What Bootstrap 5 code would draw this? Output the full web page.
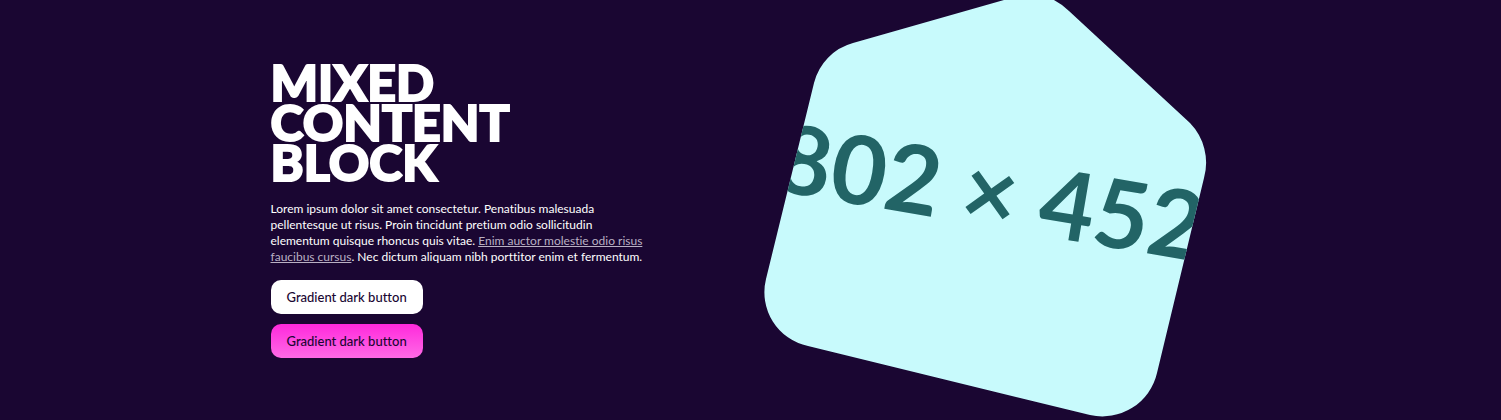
<!DOCTYPE html>
<html lang="en">
<head>
<meta charset="utf-8">
<meta name="viewport" content="width=device-width, initial-scale=1">
<title>Mixed content block</title>
<link href="https://cdn.jsdelivr.net/npm/bootstrap@5.3.0/dist/css/bootstrap.min.css" rel="stylesheet">
<style>
body { background: #1a0632; color: #fff; font-family: Lato, sans-serif; font-variant-ligatures: none; }
.content-wrap { max-width: 984px; }
.block-title { font: 900 50px/40px Lato, sans-serif; -webkit-text-stroke: 2px #fff; margin-bottom: 19px; }
.block-copy { font-size: 12px; line-height: 16px; margin-bottom: 15px; }
.block-copy a { color: #b9b0c3; }
.block-actions { gap: 10px; }
.block-btn { font-size: 13px; line-height: 18px; font-weight: 500; font-variant-ligatures: none; padding: 8px 16px; border: 0; border-radius: 10px; color: #1a0632; background: #fff; }
.block-btn:hover { color: #1a0632; background: #fff; }
.block-btn-pink, .block-btn-pink:hover { background: linear-gradient(#ff29dc, #ff6ae6); }
.shape-text { font: 700 95px Lato, sans-serif; fill: #226466; }
</style>
</head>
<body>
<main class="container content-wrap">
  <div class="row align-items-center">
    <section class="col-md-6">
      <h1 class="block-title">MIXED<br>CONTENT<br>BLOCK</h1>
      <p class="block-copy">Lorem ipsum dolor sit amet consectetur. Penatibus malesuada<br>pellentesque ut risus. Proin tincidunt pretium odio sollicitudin<br>elementum quisque rhoncus quis vitae. <a href="#">Enim auctor molestie odio risus<br>faucibus cursus</a>. Nec dictum aliquam nibh porttitor enim et fermentum.</p>
      <div class="block-actions d-flex flex-column align-items-start">
        <button type="button" class="btn block-btn">Gradient dark button</button>
        <button type="button" class="btn block-btn block-btn-pink">Gradient dark button</button>
      </div>
    </section>
    <div class="col-md-6">
      <svg class="d-block w-100" viewBox="763 0 468 420" role="img" aria-label="802 × 452">
        <defs>
          <clipPath id="blob"><path d="M853 43L1018 -4Q1046 -11 1069 11L1190 123A57 57 0 0 1 1204 178L1157 373A56 56 0 0 1 1090 415L808 346A55 55 0 0 1 766 279L814 83A55 55 0 0 1 853 43Z"/></clipPath>
        </defs>
        <g clip-path="url(#blob)">
          <rect x="763" y="-20" width="468" height="440" fill="#c8fafc"/>
          <text class="shape-text" x="985" y="226" text-anchor="middle" transform="rotate(9.6 985 226)">802 × 452</text>
        </g>
      </svg>
    </div>
  </div>
</main>
<script src="https://cdn.jsdelivr.net/npm/bootstrap@5.3.0/dist/js/bootstrap.bundle.min.js"></script>
</body>
</html>
